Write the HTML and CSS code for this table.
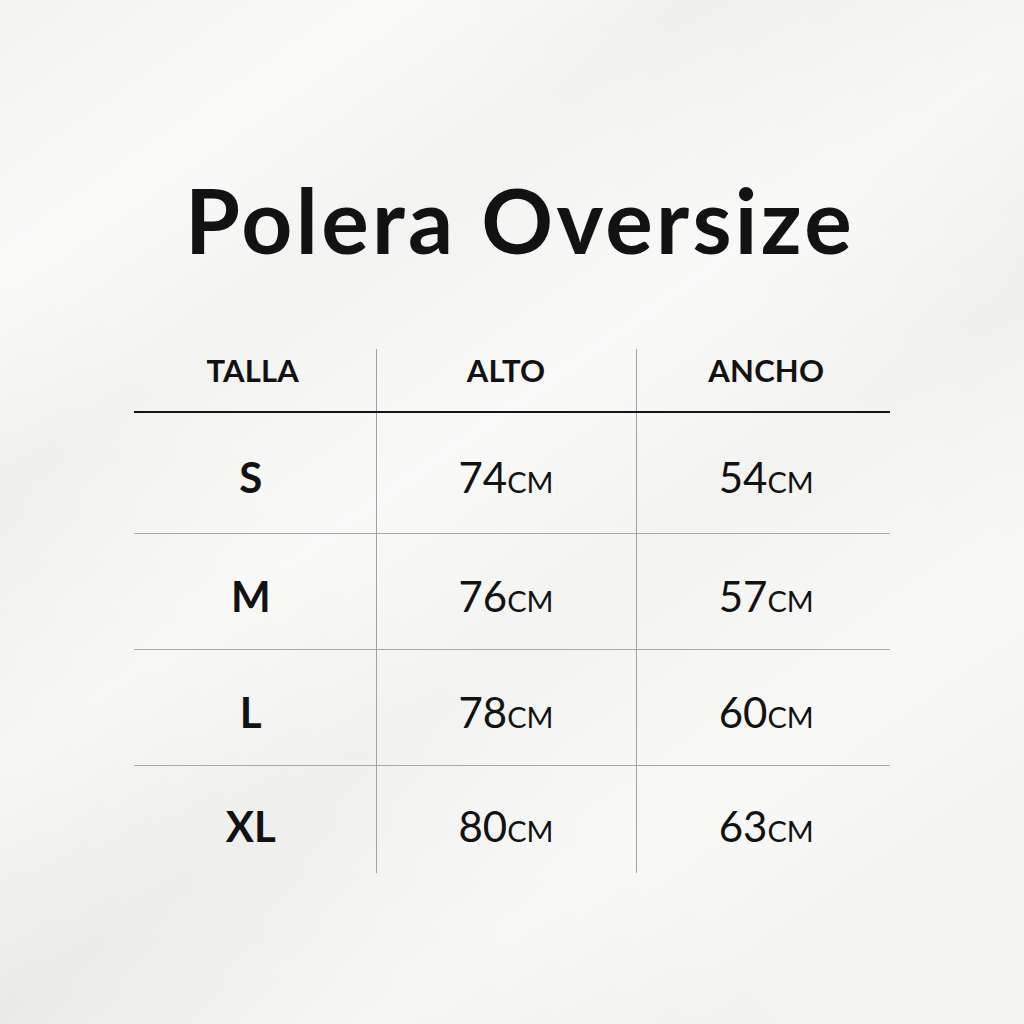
FILE: index.html
```html
<!DOCTYPE html>
<html lang="es">
<head>
<meta charset="utf-8">
<title>Polera Oversize</title>
<link rel="stylesheet" href="styles.css">
</head>
<body>
<main class="page">
  <h1 class="title">Polera Oversize</h1>
  <table class="sizes">
    <thead>
      <tr class="head-row">
        <th class="col-size">TALLA</th>
        <th class="col-alto">ALTO</th>
        <th class="col-ancho">ANCHO</th>
      </tr>
    </thead>
    <tbody>
      <tr class="row r1">
        <td class="size">S</td>
        <td class="val">74<span class="unit">cm</span></td>
        <td class="val">54<span class="unit">cm</span></td>
      </tr>
      <tr class="row r2">
        <td class="size">M</td>
        <td class="val">76<span class="unit">cm</span></td>
        <td class="val">57<span class="unit">cm</span></td>
      </tr>
      <tr class="row r3">
        <td class="size">L</td>
        <td class="val">78<span class="unit">cm</span></td>
        <td class="val">60<span class="unit">cm</span></td>
      </tr>
      <tr class="row r4">
        <td class="size">XL</td>
        <td class="val">80<span class="unit">cm</span></td>
        <td class="val">63<span class="unit">cm</span></td>
      </tr>
    </tbody>
  </table>
</main>
</body>
</html>
```
FILE: styles.css
```css
* { box-sizing: border-box; }
html, body { margin: 0; padding: 0; }
body {
  width: 1024px;
  height: 1024px;
  overflow: hidden;
  font-family: "Lato", "Noto Sans", sans-serif;
  color: #121212;
  background-color: #f3f3f1;
  background-image:
    linear-gradient(145deg, rgba(255,255,255,0) 0%, rgba(255,255,255,0.6) 16%, rgba(255,255,255,0) 28%, rgba(255,255,255,0.55) 44%, rgba(255,255,255,0) 58%, rgba(255,255,255,0.5) 74%, rgba(255,255,255,0) 88%),
    linear-gradient(45deg, rgba(228,228,226,0.6) 0%, rgba(228,228,226,0) 40%, rgba(228,228,226,0) 70%, rgba(232,232,230,0.5) 100%);
}
.page {
  display: flex;
  flex-direction: column;
  align-items: center;
  padding-top: 170px;
}
.title {
  margin: 0 0 0 16px;
  font-size: 89px;
  font-weight: 700;
  line-height: 100px;
  letter-spacing: 3.3px;
}
.sizes {
  margin-top: 79px;
  border-collapse: collapse;
  width: 756px;
}
.sizes th, .sizes td {
  padding: 0;
  text-align: center;
  vertical-align: middle;
  border-left: 1px solid #a2a2a2;
}
.sizes th:first-child, .sizes td:first-child { border-left: none; }
.col-size { width: 242px; }
.col-alto { width: 260px; }
.col-ancho { width: 254px; }
.head-row th {
  height: 63px;
  padding-bottom: 20px;
  font-size: 31px;
  font-weight: 700;
  letter-spacing: 0.2px;
  border-bottom: 2px solid #151515;
}
.head-row .col-size { padding-right: 4px; }
.head-row .col-ancho { padding-left: 6px; }
.row td {
  border-bottom: 1.5px solid #a9a9a9;
  padding-top: 9px;
}
.r1 td { height: 121px; }
.r2 td, .r3 td { height: 116px; }
.r4 td { height: 108px; border-bottom: none; padding-top: 13px; }
.size {
  font-size: 42px;
  font-weight: 700;
  padding-right: 8px !important;
}
.val {
  font-size: 42px;
  font-weight: 400;
}
.row .val:last-child { padding-left: 6px; }
.unit {
  font-variant: small-caps;
}
```
